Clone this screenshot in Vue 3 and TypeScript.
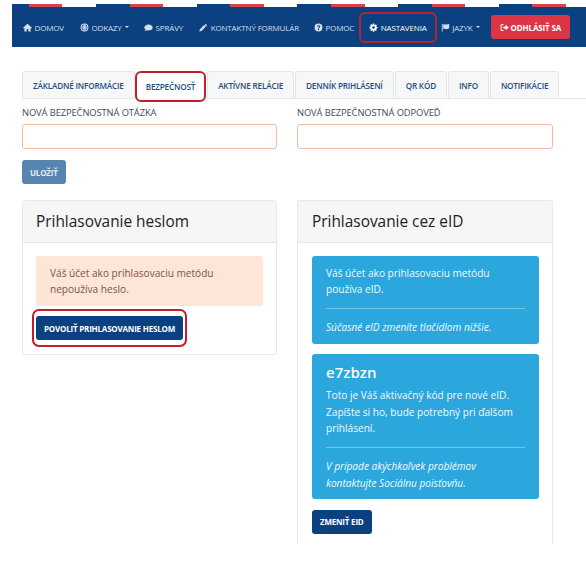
<template>
  <div class="page">
    <nav class="navbar">
      <a v-for="item in navItems" :key="item.label" class="nav-link" :class="{ marked: item.marked }">
        <svg class="ico" viewBox="0 0 16 16" aria-hidden="true"><path :d="item.icon" fill="currentColor" fill-rule="evenodd" /></svg>
        <span>{{ item.label }}</span>
        <i v-if="item.caret" class="caret"></i>
      </a>
      <a class="logout">
        <svg class="ico" viewBox="0 0 16 16" aria-hidden="true">
          <path d="M6 2.500H3.500A1.500 1.500 0 0 0 2 4v8a1.500 1.500 0 0 0 1.500 1.500H6" fill="none" stroke="currentColor" stroke-width="1.800" />
          <path d="M6 6.200h4V3l5.500 5-5.500 5V9.800H6z" fill="currentColor" />
        </svg>
        <span>Odhlásiť sa</span>
      </a>
    </nav>

    <div class="tabs" role="tablist">
      <button
        v-for="tab in tabs"
        :key="tab"
        class="tab"
        role="tab"
        :class="{ active: tab === activeTab }"
        :aria-selected="tab === activeTab"
      >
        {{ tab }}
      </button>
    </div>

    <main class="content">
      <div class="fields">
        <label class="field">
          <span>Nová bezpečnostná otázka</span>
          <input type="text" />
        </label>
        <label class="field">
          <span>Nová bezpečnostná odpoveď</span>
          <input type="text" />
        </label>
      </div>
      <button class="btn btn-muted save">Uložiť</button>

      <div class="cards">
        <section class="card">
          <h3 class="card-head">Prihlasovanie heslom</h3>
          <div class="card-body">
            <div class="alert alert-warn">Váš účet ako prihlasovaciu metódu nepoužíva heslo.</div>
            <button class="btn btn-dark btn-marked">Povoliť prihlasovanie heslom</button>
          </div>
        </section>

        <section class="card card-cut">
          <h3 class="card-head">Prihlasovanie cez eID</h3>
          <div class="card-body">
            <div class="alert alert-info">
              <p>Váš účet ako prihlasovaciu metódu používa eID.</p>
              <hr />
              <p><em>Súčasné eID zmeníte tlačidlom nižšie.</em></p>
            </div>
            <div class="alert alert-info">
              <h4>e7zbzn</h4>
              <p>Toto je Váš aktivačný kód pre nové eID. Zapíšte si ho, bude potrebný pri ďalšom prihlásení.</p>
              <hr />
              <p><em>V prípade akýchkoľvek problémov kontaktujte Sociálnu poisťovňu.</em></p>
            </div>
            <button class="btn btn-dark">Zmeniť eID</button>
          </div>
        </section>
      </div>
    </main>
  </div>
</template>

<script setup lang="ts">
type NavItem = { label: string; icon: string; caret?: boolean; marked?: boolean };

const navItems: NavItem[] = [
  { label: "Domov", icon: "M8 1.500 0 8.500l1 1.200L2.500 8.400V15h4v-4.500h3V15h4V8.400L15 9.700l1-1.200z" },
  {
    label: "Odkazy",
    caret: true,
    icon: "M8 1a7 7 0 1 0 0 14A7 7 0 0 0 8 1zM7.300 2.400C6.300 3.300 5.600 4.700 5.300 6.300H2.700a5.600 5.600 0 0 1 4.600-3.900zM8.700 2.400a5.600 5.600 0 0 1 4.600 3.900h-2.600c-.3-1.600-1-3-2-3.900zM7.300 3.800v2.500H6.500c.2-1 .4-1.800.8-2.500zM8.700 3.800c.4.7.6 1.500.8 2.500h-.8zM2.400 7.700h2.700v.8H2.400zM6.400 7.700h.9v.8h-.9zM8.700 7.700h.9v.8h-.9zM10.900 7.700h2.700v.8h-2.700zM2.700 9.800h2.600c.3 1.600 1 3 2 3.800a5.600 5.600 0 0 1-4.600-3.800zM6.500 9.800h.8v2.400c-.4-.6-.6-1.500-.8-2.400zM8.700 9.800h.8c-.2.900-.4 1.800-.8 2.400zM10.700 9.800h2.600a5.600 5.600 0 0 1-4.600 3.800c1-.8 1.700-2.200 2-3.800z",
  },
  { label: "Správy", icon: "M8 2.500c4.100 0 7.500 2.500 7.500 5.500s-3.400 5.500-7.500 5.500c-1.100 0-2.100-.2-3-.5-1 .8-2.400 1.400-4.200 1.400 1-1 1.600-2 1.800-3C1.300 10.400.5 9.300.5 8c0-3 3.400-5.500 7.500-5.500z" },
  { label: "Kontaktný formulár", icon: "M11.500 1.500l3 3-1.500 1.500-3-3zM9 3.500l3 3-7.500 7.500-4 1 1-4z" },
  {
    label: "Pomoc",
    icon: "M8 1a7 7 0 1 0 0 14A7 7 0 0 0 8 1zM8 4c1.800 0 3 1 3 2.400 0 1.100-.7 1.700-1.400 2.100-.5.300-.7.500-.7.900v.3H7V9.300c0-1 .6-1.500 1.200-1.900.5-.3.800-.5.800-.9 0-.5-.5-.8-1-.8-.6 0-1 .3-1.400.9L5.300 5.500C5.900 4.600 6.800 4 8 4zM8 10.700a1.200 1.200 0 1 1 0 2.400 1.200 1.200 0 0 1 0-2.400z",
  },
  {
    label: "Nastavenia",
    marked: true,
    icon: "M6.800 1h2.400l.3 1.900 1.100.5 1.600-1.100 1.700 1.700-1.100 1.600.5 1.100 1.900.3v2.400l-1.900.3-.5 1.100 1.100 1.600-1.700 1.700-1.600-1.100-1.100.5-.3 1.900H6.800l-.3-1.900-1.100-.5-1.600 1.100-1.700-1.700 1.100-1.600-.5-1.100L.8 9.200V6.800l1.900-.3.500-1.100-1.100-1.600 1.700-1.700 1.600 1.100 1.100-.5zM8 5.600a2.400 2.400 0 1 0 0 4.800 2.400 2.400 0 0 0 0-4.800z",
  },
  {
    label: "Jazyk",
    caret: true,
    icon: "M1.500 1.500h1.500V15H1.500zM4 2.500c2.500-1 4 .5 6 .3 1.500-.1 3-.6 4.500-1.300v8c-1.500.9-3 1.400-4.500 1.500-2 .1-3.500-1.200-6-.3z",
  },
];

const tabs = ["Základné informácie", "Bezpečnosť", "Aktívne relácie", "Denník prihlásení", "QR kód", "Info", "Notifikácie"];
const activeTab = "Bezpečnosť";
</script>

<style scoped>
.page {
  width: 586px;
  height: 563px;
  overflow: hidden;
  background: #fff;
  font-family: "Open Sans", "Noto Sans", sans-serif;
  color: #212529;
  padding-top: 4px;
  box-sizing: border-box;
}

.navbar {
  height: 43px;
  margin-left: 12px;
  box-sizing: border-box;
  padding-left: 5px;
  display: flex;
  align-items: center;
  background:
    repeating-linear-gradient(90deg, #d9434e 0 33.500px, #fff 33.500px 67px, #0b4180 67px 100.700px) 17px 0 / 100% 3px no-repeat,
    #0b4180;
}

.nav-link {
  display: flex;
  align-items: center;
  height: 31px;
  padding: 0 6px;
  margin-top: 3px;
  gap: 2.500px;
  color: #d5deea;
  font-size: 8px;
  letter-spacing: -0.15px;
  text-transform: uppercase;
  white-space: nowrap;
}
.nav-link:nth-child(n + 2) {
  margin-left: 4px;
}
.nav-link:nth-child(3),
.nav-link:nth-child(5) {
  margin-left: 3px;
}
.nav-link.marked {
  color: #fff;
  height: 31px;
  padding: 0 10px;
  margin-left: -1px;
  outline: 2px solid #b3242f;
  outline-offset: -2px;
  border-radius: 6px;
}
.nav-link.marked + .nav-link {
  margin-left: -2px;
}

.ico {
  width: 9px;
  height: 9px;
  flex: none;
}

.caret {
  width: 0;
  height: 0;
  margin-left: 1px;
  border: 2px solid transparent;
  border-top-color: currentColor;
  border-bottom: 0;
}

.logout {
  display: flex;
  align-items: center;
  gap: 1.500px;
  height: 24px;
  margin: 3px 0 0 5px;
  padding: 0 9px;
  background: #dc3545;
  border-radius: 3px;
  color: #fff;
  font-size: 8px;
  font-weight: 700;
  letter-spacing: -0.15px;
  text-transform: uppercase;
  white-space: nowrap;
}

.tabs {
  display: flex;
  gap: 1px;
  margin: 24px 0 0 22px;
  height: 27px;
  border-bottom: 1px solid #e4e6e8;
}

.tab {
  height: 27px;
  padding: 0 10px;
  border: 1px solid #e4e6e8;
  border-bottom: 0;
  border-radius: 3px 3px 0 0;
  background: #f6f7f8;
  color: #1f4f80;
  font: 600 8.200px "Open Sans", sans-serif;
  letter-spacing: -0.2px;
  text-transform: uppercase;
  white-space: nowrap;
}
.tab.active {
  background: #fff;
  height: 31px;
  padding: 0 11px;
  margin-left: -1px;
  position: relative;
  border: 0;
  outline: 2px solid #c11f2c;
  outline-offset: -2px;
  border-radius: 6px;
}

.content {
  margin-left: 22px;
  width: 531px;
}

.fields,
.cards {
  display: grid;
  grid-template-columns: 255px 256px;
  gap: 20px;
}

.field {
  display: flex;
  flex-direction: column;
  padding-top: 8px;
}
.field span {
  font-size: 9.350px;
  letter-spacing: -0.1px;
  line-height: 12px;
  text-transform: uppercase;
  color: #444b52;
  margin-bottom: 5px;
}
.field input {
  height: 25px;
  box-sizing: border-box;
  border: 1px solid #f0bd9f;
  border-radius: 3px;
  background: #fff;
}

.btn {
  display: block;
  height: 24px;
  padding: 0 8px;
  border: 0;
  border-radius: 3px;
  color: #fff;
  font: 700 8px "Open Sans", sans-serif;
  letter-spacing: -0.2px;
  text-transform: uppercase;
  white-space: nowrap;
}
.btn-muted {
  background: #5685b0;
  color: #e3ebf3;
}
.btn-dark {
  background: #0b4180;
}
.btn-marked {
  position: relative;
}
.btn-marked::after {
  content: "";
  position: absolute;
  inset: -7px -4px;
  border: 2px solid #c11f2c;
  border-radius: 7px;
}
.save {
  margin-top: 11px;
}

.cards {
  margin-top: 16px;
  align-items: start;
}

.card {
  border: 1px solid #e8e9ea;
  border-radius: 3px;
  background: #fff;
}
.card-cut {
  height: 344px;
  border-bottom: 0;
  border-radius: 3px 3px 0 0;
  box-sizing: border-box;
}

.card-head {
  height: 41px;
  margin: 0;
  padding: 0 13px;
  display: flex;
  align-items: center;
  background: #f6f6f6;
  border-bottom: 1px solid #e4e5e6;
  font-size: 15.400px;
  font-weight: 500;
  color: #1d2125;
}
.card-cut .card-head {
  padding-left: 14px;
}

.card-body {
  padding: 13px 13px 14px;
}
.card-cut .card-body {
  padding-left: 14px;
}

.alert {
  padding: 8.500px 14px;
  border-radius: 3px;
  font-size: 10.100px;
  line-height: 16.300px;
  margin-bottom: 10px;
}
.alert + .btn {
  margin-top: 10.500px;
}
.alert-warn {
  background: #fde5d8;
  color: #7c5445;
}
.alert-info {
  background: #2ba7de;
  color: #f1fafe;
}
.alert p {
  margin: 0;
}
.alert h4 {
  margin: 1px 0 6px;
  font-size: 15px;
  line-height: 18px;
  font-weight: 600;
  color: #f7fcff;
}
.alert hr {
  margin: 10.500px 0;
  border: 0;
  border-top: 1px solid #6fc4ec;
}
</style>

<style>
body {
  margin: 0;
  background: #fff;
}
</style>
